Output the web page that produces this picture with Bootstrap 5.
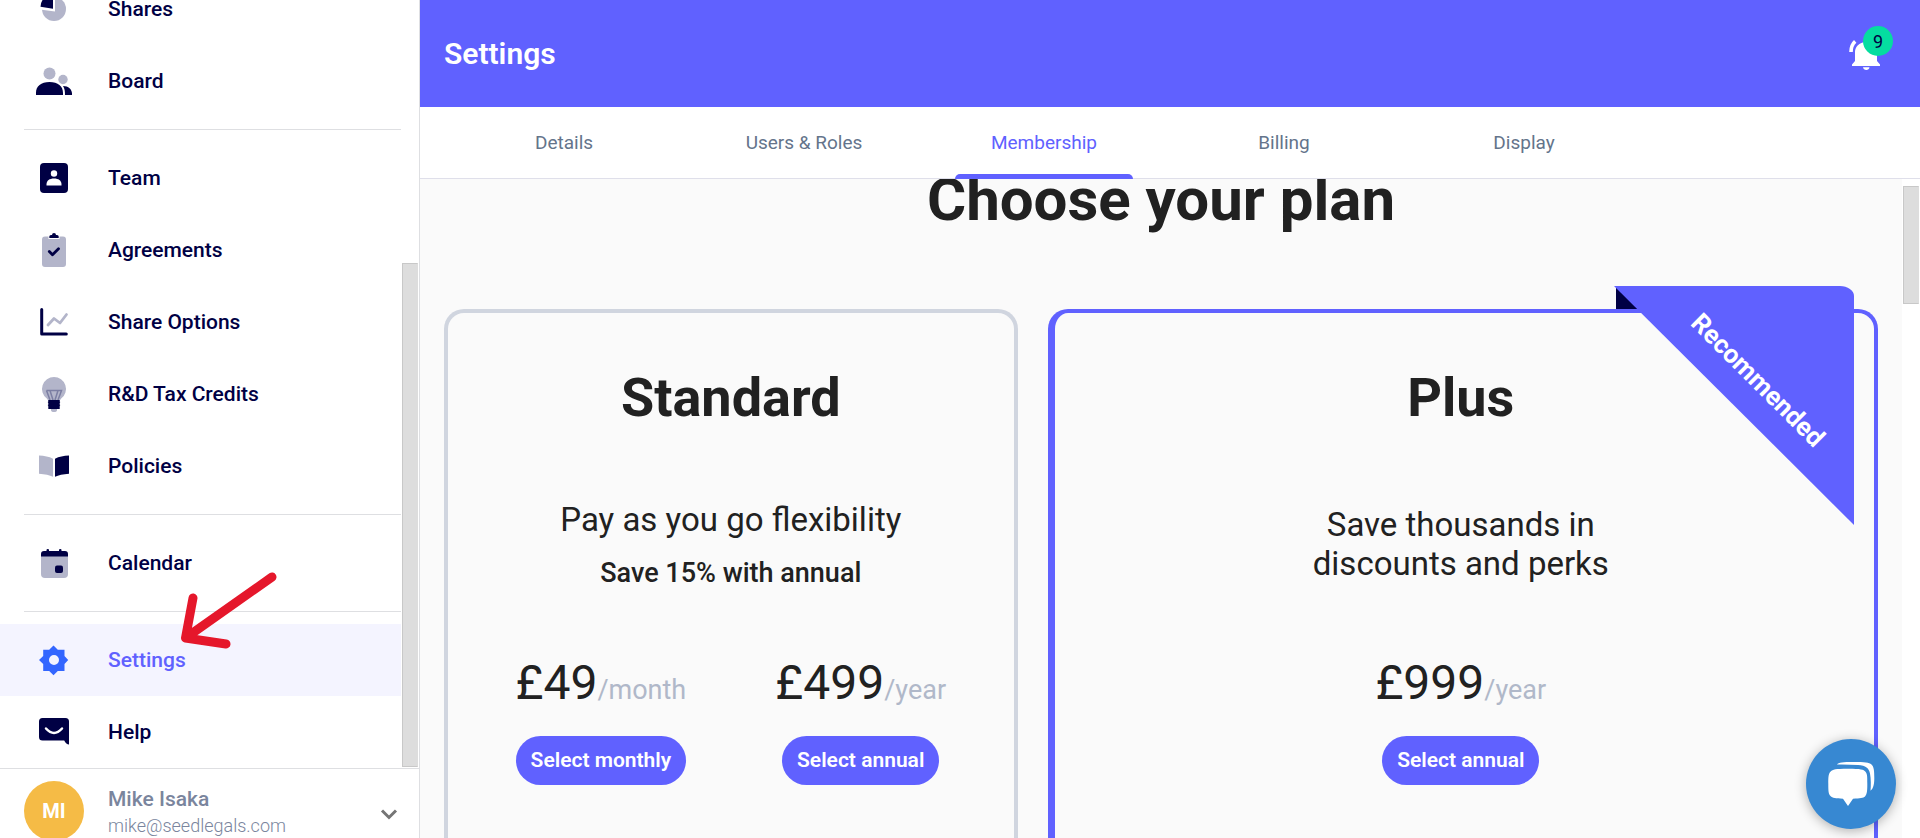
<!DOCTYPE html>
<html lang="en">
<head>
<meta charset="utf-8">
<meta name="viewport" content="width=device-width, initial-scale=1">
<title>Settings – Membership</title>
<link href="https://cdn.jsdelivr.net/npm/bootstrap@5.3.0/dist/css/bootstrap.min.css" rel="stylesheet">
<style>
  :root { --violet: #6061ff; --navy: #000044; --ink: #212121; --line: #dedfe2; }
  body { font-family: Roboto, "Liberation Sans", sans-serif; color: var(--ink); background: #fff; }

  /* Sidebar */
  .side-panel { width: 420px; border-right: 1px solid var(--line); }
  .side-nav { padding-right: 18px; }
  .side-link { height: 72px; padding: 0 36px; gap: 36px; font-size: 21px; line-height: 33px; font-weight: 500; color: var(--navy); }
  .side-link.active { background: #f4f4ff; color: var(--violet); }
  .side-link svg { width: 36px; height: 36px; flex: none; overflow: visible; }
  .side-rule { margin: 12px 0 12px 24px; border: 0; border-top: 1px solid var(--line); opacity: 1; }
  .pointer-arrow { left: 176px; top: -60px; z-index: 3; pointer-events: none; }
  .thumb { width: 16px; background: #ddd; border: 1px solid #c8c8c8; border-right-color: #ddd; }
  .side-thumb { right: 1px; bottom: 1px; height: 504px; }
  .user-bar { height: 70px; padding: 12px 20px 0 24px; border-top: 1px solid var(--line); overflow: hidden; }
  .avatar { width: 60px; height: 60px; background: #f5bb46; font-size: 20px; }
  .user-name { font-size: 21px; line-height: 28px; color: #7a859d; font-weight: 500; }
  .user-mail { font-size: 18px; line-height: 26px; color: #7a859d; font-weight: 300; }

  /* Header and tabs */
  .top-bar { height: 107px; padding: 0 39px 0 24px; background: var(--violet); }
  .top-title { font-size: 30px; font-weight: 600; }
  .bell-btn { width: 32px; height: 32px; margin-top: 3px; }
  .bell-count { width: 30px; height: 30px; left: 14px; top: -13px; background: #05dda0; color: var(--navy); font-size: 18px; }
  .tab-strip { height: 72px; padding: 0 24px; border-bottom: 1px solid #dfdfea; }
  .tab-link { width: 240px; font-size: 19px; line-height: 28px; color: #64748b; }
  .tab-link.active { color: var(--violet); }
  .tab-link.active::after { content: ""; position: absolute; left: 31px; right: 31px; bottom: -1px; height: 5px; border-radius: 5px 5px 0 0; background: var(--violet); z-index: 2; }

  /* Plans */
  .plans { background: #fafafa; padding: 0 24px; }
  .plans-title { font-size: 60px; line-height: 72px; font-weight: 700; margin: -15px 0 73px; }
  .plan { border: 4px solid #d0d5df; border-radius: 20px; padding: 53px 23px 0; }
  .plan-standard { width: 40%; }
  .plan-plus { margin-left: 30px; border-color: var(--violet); border-left-width: 7px; padding-right: 30px; }
  .plan-name { font-size: 54px; line-height: 64px; font-weight: 700; margin: 0 0 49px; }
  .plan-pitch { height: 130px; margin-bottom: 46px; font-size: 33px; line-height: 39px; font-weight: 400; }
  .plan-save { font-size: 27px; line-height: 32px; font-weight: 500; margin-top: 18px; }
  .price { font-size: 48px; line-height: 56px; font-weight: 400; margin-bottom: 25px; }
  .price span { font-size: 27px; line-height: 27px; color: #b0b8c9; }
  .plan-btn { height: 49px; padding: 0 15px; border: 0; border-radius: 25px; background: var(--violet); color: #fff; font-size: 21px; line-height: 33px; font-weight: 600; }
  .plan-btn:hover { background: #4c4df0; color: #fff; }
  .ribbon { right: 20px; top: -27px; width: 240px; height: 239px; }
  .ribbon-text { left: 144px; top: 94px; font-size: 26px; line-height: 32px; font-weight: 700; transform: translate(-50%, -50%) rotate(45deg); }
  .page-track { width: 18px; padding: 7px 1px 0; }
  .page-thumb { height: 118px; }
  .chat-btn { right: 24px; bottom: 9px; width: 90px; height: 90px; background: #3788d2; box-shadow: 0 2px 12px rgba(0,0,0,.3); z-index: 5; }
</style>
</head>
<body>
<div class="d-flex vh-100 overflow-hidden">

  <aside class="side-panel d-flex flex-column flex-shrink-0">
    <div class="position-relative flex-grow-1 overflow-hidden d-flex flex-column justify-content-end">
      <nav class="side-nav nav flex-column flex-nowrap" aria-label="Main">
        <a class="side-link d-flex align-items-center text-decoration-none" href="#shares">
          <svg viewBox="0 0 36 36"><circle cx="18" cy="18" r="12" fill="#b3b5ca"/><path d="M19 0v20.500L0 18V0z" fill="#fff"/><path d="M17 3v14.800L4.500 15.800A13 13 0 0 1 17 3z" fill="#000044"/></svg>
          Shares</a>
        <a class="side-link d-flex align-items-center text-decoration-none" href="#board">
          <svg viewBox="0 0 36 36"><circle cx="13.500" cy="10.500" r="6" fill="#b3b5ca"/><circle cx="27" cy="16.500" r="4.700" fill="#b3b5ca"/><path d="M0 32v-2c0-7 5-11 13.500-11S27 23 27 30v2zM27 23c5.500 0 9 3.500 9 7.500V32h-7c0-4-.3-6.500-2-9z" fill="#000044"/></svg>
          Board</a>
        <hr class="side-rule">
        <a class="side-link d-flex align-items-center text-decoration-none" href="#team">
          <svg viewBox="0 0 36 36"><rect x="4" y="3" width="28" height="30" rx="4" fill="#000044"/><circle cx="18" cy="13.500" r="3.200" fill="#fff"/><path d="M10.500 25.500v-1c0-4 3-6 7.500-6s7.500 2 7.500 6v1z" fill="#fff"/></svg>
          Team</a>
        <a class="side-link d-flex align-items-center text-decoration-none" href="#agreements">
          <svg viewBox="0 0 36 36"><path d="M9 4.500h3.500V7h11V4.500H27a3 3 0 0 1 3 3V32a3 3 0 0 1-3 3H9a3 3 0 0 1-3-3V7.500a3 3 0 0 1 3-3z" fill="#b3b5ca"/><path d="M13.300 6V4.500q0-1.500 1.700-1.500h1a2 2 0 0 1 4 0h1q1.700 0 1.700 1.500V6z" fill="#000044"/><path d="M13.300 19.500l3.200 3.300 6-6" fill="none" stroke="#000044" stroke-width="2.800" stroke-linecap="round" stroke-linejoin="round"/></svg>
          Agreements</a>
        <a class="side-link d-flex align-items-center text-decoration-none" href="#options">
          <svg viewBox="0 0 36 36" fill="none" stroke-linecap="round" stroke-linejoin="round"><path d="M5.700 5.500v24.500h24.600" stroke="#000044" stroke-width="3"/><path d="M12 21l6-6.500 6 4.500 6.500-8.500" stroke="#b3b5ca" stroke-width="2.800"/></svg>
          Share Options</a>
        <a class="side-link d-flex align-items-center text-decoration-none" href="#tax">
          <svg viewBox="0 0 36 36"><path d="M18 1a12 12 0 0 0-7.200 21.600q1.700 1.700 1.700 3.400h11q0-1.700 1.700-3.400A12 12 0 0 0 18 1zM15 32h6v2q0 2-3 2t-3-2z" fill="#b3b5ca"/><path d="M10.500 14.500h15L22 24M10.500 14.500L14 24M14 14.500L17 24M22 14.500L19 24" fill="none" stroke="#7c7fa3" stroke-width="1.500"/><path d="M12.300 24h11.400v1.800h.4v1h-.4v2h.4v1h-.4V33H12.300v-3.200h-.4v-1h.4v-2h-.4v-1h.4z" fill="#000044"/></svg>
          R&amp;D Tax Credits</a>
        <a class="side-link d-flex align-items-center text-decoration-none" href="#policies">
          <svg viewBox="0 0 36 36"><path d="M3 7.500q8 .2 14 3.200v18q-5-2.500-14-3z" fill="#b3b5ca"/><path d="M33 7.500q-8 .2-14 3.200v18q5-2.500 14-3z" fill="#000044"/></svg>
          Policies</a>
        <hr class="side-rule">
        <a class="side-link d-flex align-items-center text-decoration-none" href="#calendar">
          <svg viewBox="0 0 36 36"><path d="M5 10h27v19a4 4 0 0 1-4 4H9a4 4 0 0 1-4-4z" fill="#b3b5ca"/><path d="M5 11.500V9q0-3 3-3h2.500V5q0-1 1.300-1T13 5v1h10V5q0-1 1.300-1t1.200 1v1H29q3 0 3 3v2.500z" fill="#000044"/><rect x="19" y="20.500" width="8" height="7.500" rx="2" fill="#000044"/></svg>
          Calendar</a>
        <hr class="side-rule">
        <div class="position-relative">
          <a class="side-link active d-flex align-items-center text-decoration-none" href="#settings" aria-current="page">
            <svg viewBox="0 0 36 36"><path fill-rule="evenodd" d="M17.500 3.500l4.300 4.300h6.700v6.300l3.700 4-3.700 4v6.900h-6.700l-4.300 4.200-4.300-4.200H7.200v-6.900L3 18.100l4.200-4V7.800h6zM18 13a5 5 0 1 0 0 10 5 5 0 0 0 0-10z" fill="#3366ff"/></svg>
            Settings</a>
          <svg class="pointer-arrow position-absolute" width="104" height="86" viewBox="0 0 104 86" aria-hidden="true"><path d="M96 13L9.500 74M17 34L9.500 74L50 80" fill="none" stroke="#e5172b" stroke-width="9" stroke-linecap="round" stroke-linejoin="round"/></svg>
        </div>
        <a class="side-link d-flex align-items-center text-decoration-none" href="#help">
          <svg viewBox="0 0 36 36"><path d="M6.500 4h23Q33 4 33 7.500v23q-2.800 0-4.800-4H6.500Q3 26.500 3 23V7.500Q3 4 6.500 4z" fill="#000044"/><path d="M10 14.500q8 9 16 0" fill="none" stroke="#fff" stroke-width="2.500" stroke-linecap="round"/></svg>
          Help</a>
      </nav>
      <div class="thumb side-thumb position-absolute"></div>
    </div>
    <div class="user-bar d-flex flex-shrink-0">
      <div class="avatar rounded-circle text-white fw-bold d-flex align-items-center justify-content-center flex-shrink-0">MI</div>
      <div class="ms-4 flex-grow-1 pt-1">
        <div class="user-name">Mike Isaka</div>
        <div class="user-mail">mike@seedlegals.com</div>
      </div>
      <button class="btn p-0 pt-2 border-0 lh-1" type="button" aria-label="Account menu">
        <svg width="20" height="12" viewBox="0 0 20 12"><path d="M3 2.500l7 7 7-7" fill="none" stroke="#757575" stroke-width="3"/></svg>
      </button>
    </div>
  </aside>

  <div class="d-flex flex-column flex-grow-1 overflow-hidden">
    <header class="top-bar d-flex align-items-center justify-content-between flex-shrink-0">
      <h2 class="top-title text-white m-0">Settings</h2>
      <button class="bell-btn btn p-0 border-0 position-relative" type="button" aria-label="9 notifications">
        <svg class="d-block" width="32" height="32" viewBox="0 0 32 32"><path d="M17 3C10 3.500 6 8 6 13v9l-3 3.500V27h28v-1.500L28 22v-9C28 8 24 3.500 17 3zM14 28.300h6.500q-.5 2.700-3.200 2.700t-3.300-2.700z" fill="#fff"/><path d="M2 13Q2 6 6.200 2.300" fill="none" stroke="#fff" stroke-width="3.600"/></svg>
        <span class="bell-count position-absolute rounded-circle d-flex align-items-center justify-content-center">9</span>
      </button>
    </header>

    <nav class="tab-strip d-flex flex-shrink-0" aria-label="Settings sections">
      <a class="tab-link position-relative d-flex align-items-center justify-content-center text-decoration-none" href="#details">Details</a>
      <a class="tab-link position-relative d-flex align-items-center justify-content-center text-decoration-none" href="#users">Users &amp; Roles</a>
      <a class="tab-link active position-relative d-flex align-items-center justify-content-center text-decoration-none" href="#membership" aria-current="page">Membership</a>
      <a class="tab-link position-relative d-flex align-items-center justify-content-center text-decoration-none" href="#billing">Billing</a>
      <a class="tab-link position-relative d-flex align-items-center justify-content-center text-decoration-none" href="#display">Display</a>
    </nav>

    <div class="d-flex flex-grow-1 overflow-hidden">
      <main class="plans d-flex flex-column flex-grow-1 overflow-hidden text-center">
        <h1 class="plans-title">Choose your plan</h1>
        <div class="d-flex flex-grow-1">
          <section class="plan plan-standard border-bottom-0 rounded-bottom-0">
            <h2 class="plan-name">Standard</h2>
            <div class="plan-pitch d-flex flex-column justify-content-center">
              <div>Pay as you go flexibility</div>
              <div class="plan-save">Save 15% with annual</div>
            </div>
            <div class="row g-0">
              <div class="col-6">
                <div class="price">£49<span>/month</span></div>
                <button class="plan-btn btn" type="button">Select monthly</button>
              </div>
              <div class="col-6">
                <div class="price">£499<span>/year</span></div>
                <button class="plan-btn btn" type="button">Select annual</button>
              </div>
            </div>
          </section>
          <section class="plan plan-plus position-relative flex-grow-1 border-bottom-0 rounded-bottom-0">
            <div class="ribbon position-absolute">
              <svg class="d-block w-100 h-100" viewBox="0 0 240 239"><path d="M2 0v23h23z" fill="#000044"/><path d="M0 0h226a14 10 0 0 1 14 10v229z" fill="#6061ff"/></svg>
              <span class="ribbon-text position-absolute text-white">Recommended</span>
            </div>
            <h2 class="plan-name">Plus</h2>
            <div class="plan-pitch d-flex flex-column justify-content-center">
              <div>Save thousands in<br>discounts and perks</div>
            </div>
            <div class="price">£999<span>/year</span></div>
            <button class="plan-btn btn" type="button">Select annual</button>
          </section>
        </div>
      </main>
      <div class="page-track flex-shrink-0"><div class="thumb page-thumb"></div></div>
    </div>
  </div>

  <button class="chat-btn btn p-0 border-0 rounded-circle position-fixed d-flex align-items-center justify-content-center" type="button" aria-label="Open chat">
    <svg width="50" height="50" viewBox="0 0 50 50"><path d="M11 5.500C12.500 3.500 17 3 27 3c12 0 16 .3 18.500 2.500S48.300 12 48.300 19c0 6-.8 10.500-3.800 12.700.5-5 .5-12-.5-17.200-1.200-5.500-4-7.800-12-8.500Q22 5.300 11 5.500z" fill="#fff"/><path d="M22 9.700c13 0 15.500.8 17.500 3s1.800 6 1.800 12.300c0 7-.2 10-2.300 12.500-1.500 1.700-5 1.900-12 2.200L22 47l-5-7.300c-7.500-.3-10.500-.5-12.500-2.700S2.300 32.500 2.300 25 2.500 14.700 4.700 12.500 9 9.700 22 9.700z" fill="#fff"/></svg>
  </button>
</div>
<script src="https://cdn.jsdelivr.net/npm/bootstrap@5.3.0/dist/js/bootstrap.bundle.min.js"></script>
</body>
</html>
